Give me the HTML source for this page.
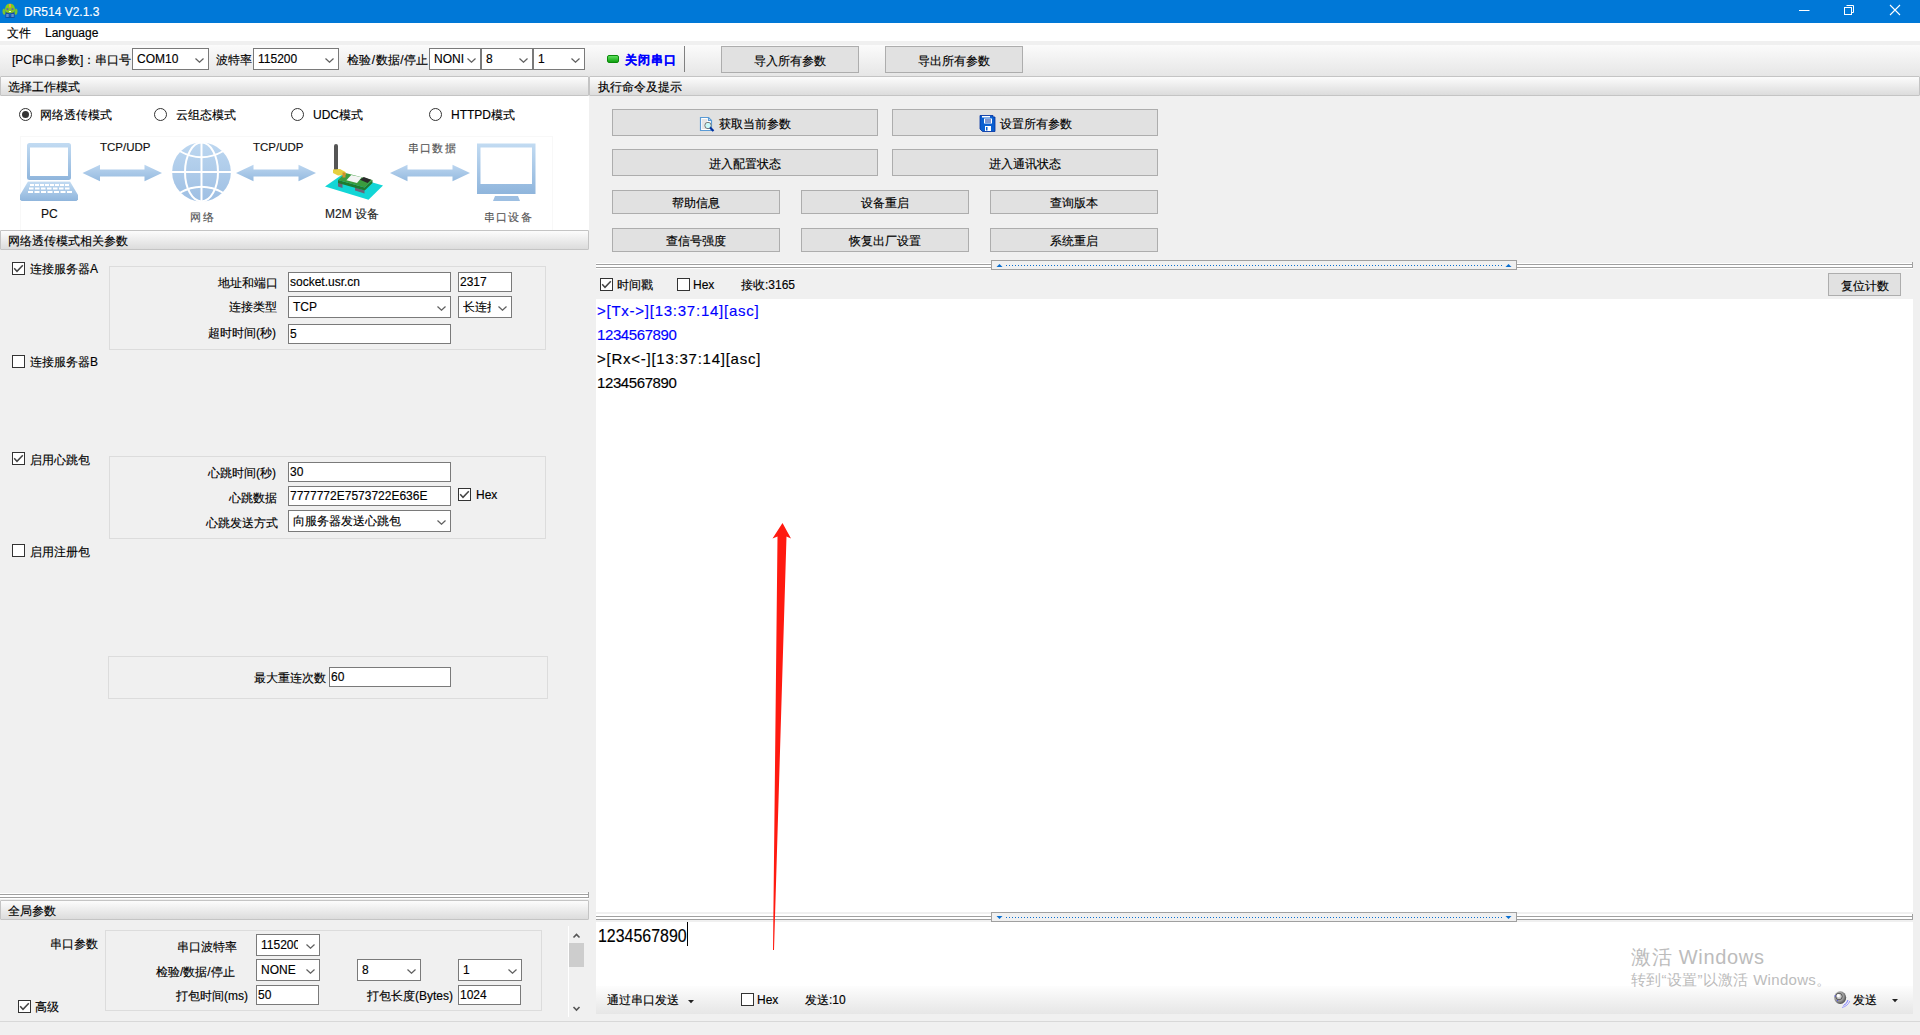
<!DOCTYPE html>
<html><head><meta charset="utf-8">
<style>
*{box-sizing:border-box;margin:0;padding:0}
html,body{width:1920px;height:1035px;overflow:hidden}
body{-webkit-text-stroke:.15px currentColor;position:relative;background:#f0f0f0;font-family:"Liberation Sans",sans-serif;font-size:12px;color:#000}
.a{position:absolute;white-space:nowrap}
.t{position:absolute;white-space:nowrap;line-height:14px}
#title{left:0;top:0;width:1920px;height:23px;background:#0078d7}
#menu{left:0;top:23px;width:1920px;height:18px;background:#fff}
#tb{left:0;top:45px;width:1920px;height:31px;background:linear-gradient(#fbfbfb,#e6e6e6)}
.hdr{position:absolute;height:20px;background:linear-gradient(#fcfcfc,#dcdcdc);border:1px solid #c4c4c4;border-radius:1px}
.hdr span{position:absolute;left:7px;top:3px;line-height:14px}
.combo{position:absolute;background:#fff;border:1px solid #7a7a7a;height:22px}
.combo span{position:absolute;left:4px;top:3px;line-height:14px;white-space:nowrap}
.combo svg{position:absolute;right:4px;top:9px}
.inp{position:absolute;background:#fff;border:1px solid #7a7a7a;height:20px}
.inp span{position:absolute;left:1px;top:2px;line-height:14px;white-space:nowrap}
.btn{position:absolute;background:#e1e1e1;border:1px solid #adadad;text-align:center;line-height:24px;white-space:nowrap}
.chk{position:absolute;width:13px;height:13px;border:1px solid #333;background:#fff}
.chk svg{position:absolute;left:0;top:0}
.rad{position:absolute;width:13px;height:13px;border:1px solid #333;border-radius:50%;background:#fff}
.rad.on::after{content:"";position:absolute;left:2px;top:2px;width:7px;height:7px;border-radius:50%;background:#333}
.grp{position:absolute;border:1px solid #dcdcdc}
</style></head><body>
<!-- title -->
<div id="title" class="a"></div>
<div class="t" style="left:24px;top:5px;color:#fff;font-size:12px">DR514 V2.1.3</div>
<svg class="a" style="left:0;top:0" width="22" height="22" viewBox="0 0 22 22">
<ellipse cx="10" cy="17.3" rx="5" ry="0.8" fill="#0a3a80" opacity=".6"/>
<rect x="5.5" y="12" width="4" height="5.5" rx="1" fill="#1a4aa0"/><rect x="10.5" y="12" width="4" height="5.5" rx="1" fill="#1a4aa0"/>
<rect x="6.2" y="14" width="2.5" height="3" fill="#5a90d0"/><rect x="11.3" y="14" width="2.5" height="3" fill="#5a90d0"/>
<path d="M2.5 11Q2.5 8 4.5 8.5L5.5 13L4.5 15Q2.5 14.5 2.5 11Z" fill="#7cc52a"/>
<path d="M17.5 11Q17.5 8 15.5 8.5L14.5 13L15.5 15Q17.5 14.5 17.5 11Z" fill="#7cc52a"/>
<path d="M5 10Q5 3.5 10 3.5Q15 3.5 15 10Q15 13 10 13Q5 13 5 10Z" fill="#84c91e"/>
<rect x="9" y="4" width="2" height="3.5" fill="#f0a040"/>
<circle cx="7.5" cy="9.2" r="1.1" fill="#6a60b0"/><circle cx="12.5" cy="9.2" r="1.1" fill="#6a60b0"/>
<rect x="9" y="11" width="2" height="1" fill="#eee"/>
</svg>
<svg class="a" style="left:1790px;top:0" width="130" height="23">
<rect x="9" y="10" width="10.5" height="1" fill="#fff"/>
<path d="M56.5 5.5H63.5V12.5H62" stroke="#fff" fill="none"/><rect x="54.5" y="7.5" width="7" height="7" stroke="#fff" fill="none"/>
<path d="M100 5L110 15M110 5L100 15" stroke="#fff" stroke-width="1.1"/>
</svg>
<!-- menu -->
<div id="menu" class="a"></div>
<div class="t" style="left:7px;top:26px">文件</div>
<div class="t" style="left:45px;top:26px">Language</div>
<!-- toolbar -->
<div id="tb" class="a"></div>
<div class="t" style="left:12px;top:53px">[PC串口参数]：串口号</div>
<div class="combo" style="left:132px;top:48px;width:77px"><span>COM10</span><svg width="9" height="5"><path d="M.5 .5L4.5 4.2L8.5 .5" stroke="#606060" stroke-width="1.25" fill="none"/></svg></div>
<div class="t" style="left:216px;top:53px">波特率</div>
<div class="combo" style="left:253px;top:48px;width:86px"><span>115200</span><svg width="9" height="5"><path d="M.5 .5L4.5 4.2L8.5 .5" stroke="#606060" stroke-width="1.25" fill="none"/></svg></div>
<div class="t" style="left:347px;top:53px;letter-spacing:.4px">检验/数据/停止</div>
<div class="combo" style="left:429px;top:48px;width:52px"><span>NONI</span><svg width="9" height="5"><path d="M.5 .5L4.5 4.2L8.5 .5" stroke="#606060" stroke-width="1.25" fill="none"/></svg></div>
<div class="combo" style="left:481px;top:48px;width:52px"><span>8</span><svg width="9" height="5"><path d="M.5 .5L4.5 4.2L8.5 .5" stroke="#606060" stroke-width="1.25" fill="none"/></svg></div>
<div class="combo" style="left:533px;top:48px;width:52px"><span>1</span><svg width="9" height="5"><path d="M.5 .5L4.5 4.2L8.5 .5" stroke="#606060" stroke-width="1.25" fill="none"/></svg></div>
<div class="a" style="left:607px;top:55px;width:12px;height:8px;background:linear-gradient(#5fe05f,#10a010);border:1px solid #0a8a0a;border-radius:2px"></div>
<div class="t" style="left:625px;top:53px;color:#0000ff;font-weight:bold;letter-spacing:1px">关闭串口</div>
<div class="a" style="left:684px;top:46px;width:1px;height:26px;background:#808080"></div>
<div class="btn" style="left:721px;top:46px;width:138px;height:27px;line-height:28px">导入所有参数</div>
<div class="btn" style="left:885px;top:46px;width:138px;height:27px;line-height:28px">导出所有参数</div>

<!-- LEFT PANEL -->
<div class="hdr" style="left:0;top:76px;width:589px"><span>选择工作模式</span></div>
<div class="a" style="left:0;top:96px;width:589px;height:134px;background:#fff"></div>
<div class="rad on" style="left:19px;top:108px"></div><div class="t" style="left:40px;top:108px">网络透传模式</div>
<div class="rad" style="left:154px;top:108px"></div><div class="t" style="left:176px;top:108px">云组态模式</div>
<div class="rad" style="left:291px;top:108px"></div><div class="t" style="left:313px;top:108px">UDC模式</div>
<div class="rad" style="left:429px;top:108px"></div><div class="t" style="left:451px;top:108px">HTTPD模式</div>
<svg class="a" style="left:0;top:96px" width="589" height="134" viewBox="0 96 589 134">
<defs><linearGradient id="bg" x1="0" y1="0" x2="0" y2="1"><stop offset="0" stop-color="#bcd6f0"/><stop offset="1" stop-color="#95badf"/></linearGradient>
<linearGradient id="bg3" x1="0" y1="0" x2="0" y2="1"><stop offset="0" stop-color="#bdd7f0"/><stop offset="1" stop-color="#9ebfe3"/></linearGradient><linearGradient id="bg2" x1="0" y1="0" x2="0" y2="1"><stop offset="0" stop-color="#c2dbf2"/><stop offset="1" stop-color="#8fb5dc"/></linearGradient></defs>
<rect x="20.5" y="136.5" width="532" height="100" fill="none" stroke="#f8f8f8"/>
<!-- laptop -->
<rect x="27" y="143" width="44" height="37" rx="2.5" fill="url(#bg2)"/>
<rect x="30" y="147.5" width="38" height="28.5" fill="#fff"/>
<path d="M28 181.5H70L78 195V199.5L76.5 201H21.5L20 199.5V195Z" fill="url(#bg2)"/>
<g fill="#fff">
<rect x="30" y="184" width="4" height="2"/><rect x="35" y="184" width="4" height="2"/><rect x="40" y="184" width="4" height="2"/><rect x="45" y="184" width="4" height="2"/><rect x="50" y="184" width="4" height="2"/><rect x="55" y="184" width="4" height="2"/><rect x="60" y="184" width="4" height="2"/><rect x="65" y="184" width="4" height="2"/>
<rect x="29" y="187.5" width="4.5" height="2"/><rect x="35" y="187.5" width="4.5" height="2"/><rect x="41" y="187.5" width="4.5" height="2"/><rect x="47" y="187.5" width="4.5" height="2"/><rect x="53" y="187.5" width="4.5" height="2"/><rect x="59" y="187.5" width="4.5" height="2"/><rect x="65" y="187.5" width="4.5" height="2"/>
<rect x="28" y="191" width="5" height="2"/><rect x="34.5" y="191" width="5" height="2"/><rect x="41" y="191" width="5" height="2"/><rect x="47.5" y="191" width="5" height="2"/><rect x="54" y="191" width="5" height="2"/><rect x="60.5" y="191" width="5" height="2"/><rect x="67" y="191" width="5" height="2"/>
</g>
<rect x="27" y="180" width="44" height="1.2" fill="#fff"/>
<path d="M82.5 173L100.0 164.8V169.4H144.5V164.8L162 173L144.5 181.2V176.6H100.0V181.2Z" fill="url(#bg)"/><path d="M236 173L253.5 164.8V169.4H298.5V164.8L316 173L298.5 181.2V176.6H253.5V181.2Z" fill="url(#bg)"/><path d="M390 173L407.5 164.8V169.4H452.5V164.8L470 173L452.5 181.2V176.6H407.5V181.2Z" fill="url(#bg)"/>
<!-- globe -->
<g transform="translate(201.5 172)">
<circle r="29.4" fill="url(#bg3)"/>
<g stroke="#fff" stroke-width="2" fill="none">
<line x1="0" y1="-30" x2="0" y2="30"/><line x1="-30" y1="0" x2="30" y2="0"/>
<ellipse rx="16.5" ry="29.4"/>
<path d="M-22 -21Q0 -8.5 22 -21"/><path d="M-22 21Q0 8.5 22 21"/>
</g></g>
<!-- monitor -->
<rect x="477" y="143.5" width="58.5" height="50.5" fill="url(#bg2)"/>
<rect x="480.5" y="147.5" width="51.5" height="36.5" fill="#fff"/>
<path d="M495 196H518L520 201H493Z" fill="#9dbfe2"/>
<!-- m2m device -->
<path d="M325 186.5L343 174L383 185.5L368.5 199.8Z" fill="#12d6d6"/>
<path d="M338 182L342.5 183.5V188L338 186.5Z" fill="#6a6478"/><path d="M355 187.5L364.5 190.5V193.5L355 190.5Z" fill="#6a6478"/>
<path d="M338 180L364.7 187.5L372.5 180V183L364.7 190.5L338 183Z" fill="#1f7a30"/>
<path d="M338 180L345.5 173L372.5 180L364.7 187.5Z" fill="#3a9c3e"/>
<path d="M346.4 180.2L351.2 175L361.8 177.3L357 183Z" fill="#f4f4f4"/>
<path d="M360 179.8L363.8 177L371 179.8L367.6 183Z" fill="#2a2a2a"/>
<rect x="334" y="144" width="4" height="27" rx="2" fill="#555"/>
<path d="M333 169.5L340 169L345.5 172V175L338 175.5L333 173Z" fill="#e6d040"/>
<rect x="342.5" y="172.5" width="3" height="5" fill="#d09030"/>
</svg>
<div class="a" style="left:100px;top:140px;font-size:11.5px;line-height:14px;color:#111">TCP/UDP</div>
<div class="a" style="left:253px;top:140px;font-size:11.5px;line-height:14px;color:#111">TCP/UDP</div>
<div class="a" style="left:408px;top:141px;font-size:11px;line-height:14px;color:#555;letter-spacing:1.2px">串口数据</div>
<div class="a" style="left:41px;top:207px;font-size:12px;line-height:14px;color:#111">PC</div>
<div class="a" style="left:190px;top:210px;font-size:11px;line-height:14px;color:#555;letter-spacing:1.5px">网络</div>
<div class="a" style="left:325px;top:207px;font-size:12px;line-height:14px;color:#222">M2M 设备</div>
<div class="a" style="left:484px;top:210px;font-size:11px;line-height:14px;color:#555;letter-spacing:1.2px">串口设备</div>

<div class="hdr" style="left:0;top:230px;width:589px"><span>网络透传模式相关参数</span></div>

<div class="chk on" style="left:12px;top:262px"><svg width="11" height="11"><path d="M1.2 5.3L4 8.3L9.8 2.2" stroke="#444" stroke-width="1.5" fill="none"/></svg></div><div class="t" style="left:30px;top:262px">连接服务器A</div>
<div class="grp" style="left:109px;top:266px;width:437px;height:84px"></div>
<div class="t" style="left:218px;top:276px">地址和端口</div>
<div class="inp" style="left:288px;top:272px;width:163px"><span>socket.usr.cn</span></div>
<div class="inp" style="left:458px;top:272px;width:54px"><span>2317</span></div>
<div class="t" style="left:229px;top:300px">连接类型</div>
<div class="combo" style="left:288px;top:296px;width:163px"><span>TCP</span><svg width="9" height="5"><path d="M.5 .5L4.5 4.2L8.5 .5" stroke="#606060" stroke-width="1.25" fill="none"/></svg></div>
<div class="combo" style="left:458px;top:296px;width:54px"><span style="width:28px;overflow:hidden">长连接</span><svg width="9" height="5"><path d="M.5 .5L4.5 4.2L8.5 .5" stroke="#606060" stroke-width="1.25" fill="none"/></svg></div>
<div class="t" style="left:208px;top:326px">超时时间(秒)</div>
<div class="inp" style="left:288px;top:324px;width:163px"><span>5</span></div>

<div class="chk" style="left:12px;top:355px"></div><div class="t" style="left:30px;top:355px">连接服务器B</div>

<div class="chk on" style="left:12px;top:452px"><svg width="11" height="11"><path d="M1.2 5.3L4 8.3L9.8 2.2" stroke="#444" stroke-width="1.5" fill="none"/></svg></div><div class="t" style="left:30px;top:453px">启用心跳包</div>
<div class="grp" style="left:109px;top:456px;width:437px;height:83px"></div>
<div class="t" style="left:208px;top:466px">心跳时间(秒)</div>
<div class="inp" style="left:288px;top:462px;width:163px"><span>30</span></div>
<div class="t" style="left:229px;top:491px">心跳数据</div>
<div class="inp" style="left:288px;top:486px;width:163px"><span>7777772E7573722E636E</span></div>
<div class="chk on" style="left:458px;top:488px"><svg width="11" height="11"><path d="M1.2 5.3L4 8.3L9.8 2.2" stroke="#444" stroke-width="1.5" fill="none"/></svg></div><div class="t" style="left:476px;top:488px">Hex</div>
<div class="t" style="left:206px;top:516px">心跳发送方式</div>
<div class="combo" style="left:288px;top:510px;width:163px"><span>向服务器发送心跳包</span><svg width="9" height="5"><path d="M.5 .5L4.5 4.2L8.5 .5" stroke="#606060" stroke-width="1.25" fill="none"/></svg></div>

<div class="chk" style="left:12px;top:544px"></div><div class="t" style="left:30px;top:545px">启用注册包</div>

<div class="grp" style="left:108px;top:656px;width:440px;height:43px"></div>
<div class="t" style="left:254px;top:671px">最大重连次数</div>
<div class="inp" style="left:329px;top:667px;width:122px"><span>60</span></div>

<svg class="a" style="left:0;top:892px" width="590" height="7"><rect x="0" y="1" width="589" height="6" fill="#fff"/><rect x="0" y="2" width="589" height="1" fill="#a0a0a0"/><rect x="0" y="5" width="589" height="1" fill="#a0a0a0"/><rect x="588" y="0" width="1" height="6" fill="#a0a0a0"/></svg>
<div class="hdr" style="left:0;top:900px;width:589px"><span>全局参数</span></div>
<div class="t" style="left:50px;top:937px">串口参数</div>
<div class="grp" style="left:105px;top:930px;width:437px;height:81px"></div>
<div class="t" style="left:177px;top:940px">串口波特率</div>
<div class="combo" style="left:256px;top:934px;width:64px"><span style="width:37px;overflow:hidden">115200</span><svg width="9" height="5"><path d="M.5 .5L4.5 4.2L8.5 .5" stroke="#606060" stroke-width="1.25" fill="none"/></svg></div>
<div class="t" style="left:156px;top:965px">检验/数据/停止</div>
<div class="combo" style="left:256px;top:959px;width:64px"><span>NONE</span><svg width="9" height="5"><path d="M.5 .5L4.5 4.2L8.5 .5" stroke="#606060" stroke-width="1.25" fill="none"/></svg></div>
<div class="combo" style="left:357px;top:959px;width:64px"><span>8</span><svg width="9" height="5"><path d="M.5 .5L4.5 4.2L8.5 .5" stroke="#606060" stroke-width="1.25" fill="none"/></svg></div>
<div class="combo" style="left:458px;top:959px;width:64px"><span>1</span><svg width="9" height="5"><path d="M.5 .5L4.5 4.2L8.5 .5" stroke="#606060" stroke-width="1.25" fill="none"/></svg></div>
<div class="t" style="left:176px;top:989px">打包时间(ms)</div>
<div class="inp" style="left:256px;top:985px;width:63px"><span>50</span></div>
<div class="t" style="left:367px;top:989px">打包长度(Bytes)</div>
<div class="inp" style="left:458px;top:985px;width:63px"><span>1024</span></div>
<div class="chk on" style="left:18px;top:1000px"><svg width="11" height="11"><path d="M1.2 5.3L4 8.3L9.8 2.2" stroke="#444" stroke-width="1.5" fill="none"/></svg></div><div class="t" style="left:35px;top:1000px">高级</div>
<svg class="a" style="left:566px;top:924px" width="20" height="96">
<rect x="2" y="2" width="1" height="91" fill="#fff"/>
<rect x="3" y="19" width="15" height="24" fill="#cdcdcd"/>
<path d="M7.5 13.5L10.5 10.5L13.5 13.5" stroke="#555" stroke-width="1.6" fill="none"/>
<path d="M7.5 83L10.5 86L13.5 83" stroke="#555" stroke-width="1.6" fill="none"/>
</svg>
<div class="a" style="left:0;top:1021px;width:1920px;height:1px;background:#d8d8d8"></div>

<!-- RIGHT PANEL -->
<div class="hdr" style="left:589px;top:76px;width:1331px"><span style="left:8px">执行命令及提示</span></div>
<div class="btn" style="left:612px;top:109px;width:266px;height:27px;line-height:29px"><svg style="vertical-align:-4px;margin-right:4px" width="16" height="16" viewBox="0 0 16 16">
<path d="M1.5 1.5H9.5L12.5 4.5V14.5H1.5Z" fill="#fff" stroke="#5b9bd5" stroke-width="1.2"/>
<path d="M9.5 1.5V4.5H12.5" fill="none" stroke="#5b9bd5" stroke-width="1.2"/>
<g stroke="#ccc" stroke-width="1"><line x1="3" y1="4" x2="8" y2="4"/><line x1="3" y1="6" x2="8" y2="6"/><line x1="3" y1="8" x2="6" y2="8"/><line x1="3" y1="10" x2="6" y2="10"/><line x1="3" y1="12" x2="7" y2="12"/></g>
<circle cx="9" cy="9.5" r="3.2" fill="#c8f8f8" stroke="#777" stroke-width="1"/>
<path d="M11 11.5L14.5 15" stroke="#0030a0" stroke-width="2.2"/>
</svg>获取当前参数</div>
<div class="btn" style="left:892px;top:109px;width:266px;height:27px;line-height:29px"><svg style="vertical-align:-4px;margin-right:4px" width="17" height="17" viewBox="0 0 17 17">
<path d="M1 0.5H14V2H16V16.5H3.5L1 14Z" fill="#0a5fd0" stroke="#0030a0" stroke-width="0.8"/>
<rect x="3" y="1" width="8" height="1.5" fill="#fff"/>
<rect x="5" y="3.5" width="8" height="5" fill="#fff"/><rect x="6" y="4.5" width="6" height="1" fill="#0030a0"/><rect x="6" y="6.5" width="6" height="1" fill="#0030a0"/>
<rect x="6" y="11" width="6" height="5" fill="#fff"/><rect x="7" y="12" width="1.5" height="3.5" fill="#0a5fd0"/>
</svg>设置所有参数</div>
<div class="btn" style="left:612px;top:149px;width:266px;height:27px;line-height:29px">进入配置状态</div>
<div class="btn" style="left:892px;top:149px;width:266px;height:27px;line-height:29px">进入通讯状态</div>
<div class="btn" style="left:612px;top:190px;width:168px;height:24px">帮助信息</div>
<div class="btn" style="left:801px;top:190px;width:168px;height:24px">设备重启</div>
<div class="btn" style="left:990px;top:190px;width:168px;height:24px">查询版本</div>
<div class="btn" style="left:612px;top:228px;width:168px;height:24px">查信号强度</div>
<div class="btn" style="left:801px;top:228px;width:168px;height:24px">恢复出厂设置</div>
<div class="btn" style="left:990px;top:228px;width:168px;height:24px">系统重启</div>
<svg class="a" style="left:0;top:0" width="1920" height="1035" viewBox="0 0 1920 1035">
<rect x="596" y="263" width="1317" height="6" fill="#fff"/>
<rect x="596" y="264" width="1317" height="1" fill="#a0a0a0"/><rect x="596" y="267" width="1317" height="1" fill="#a0a0a0"/>
<rect x="1912" y="262" width="1" height="6" fill="#a0a0a0"/>
<rect x="991.5" y="260.5" width="525" height="9" fill="#f0f0f0" stroke="#a0a0a0"/>
<rect x="1006" y="265" width="1" height="1" fill="#0a6fd0"/><rect x="1009" y="265" width="1" height="1" fill="#0a6fd0"/><rect x="1012" y="265" width="1" height="1" fill="#0a6fd0"/><rect x="1015" y="265" width="1" height="1" fill="#0a6fd0"/><rect x="1018" y="265" width="1" height="1" fill="#0a6fd0"/><rect x="1021" y="265" width="1" height="1" fill="#0a6fd0"/><rect x="1024" y="265" width="1" height="1" fill="#0a6fd0"/><rect x="1027" y="265" width="1" height="1" fill="#0a6fd0"/><rect x="1030" y="265" width="1" height="1" fill="#0a6fd0"/><rect x="1033" y="265" width="1" height="1" fill="#0a6fd0"/><rect x="1036" y="265" width="1" height="1" fill="#0a6fd0"/><rect x="1039" y="265" width="1" height="1" fill="#0a6fd0"/><rect x="1042" y="265" width="1" height="1" fill="#0a6fd0"/><rect x="1045" y="265" width="1" height="1" fill="#0a6fd0"/><rect x="1048" y="265" width="1" height="1" fill="#0a6fd0"/><rect x="1051" y="265" width="1" height="1" fill="#0a6fd0"/><rect x="1054" y="265" width="1" height="1" fill="#0a6fd0"/><rect x="1057" y="265" width="1" height="1" fill="#0a6fd0"/><rect x="1060" y="265" width="1" height="1" fill="#0a6fd0"/><rect x="1063" y="265" width="1" height="1" fill="#0a6fd0"/><rect x="1066" y="265" width="1" height="1" fill="#0a6fd0"/><rect x="1069" y="265" width="1" height="1" fill="#0a6fd0"/><rect x="1072" y="265" width="1" height="1" fill="#0a6fd0"/><rect x="1075" y="265" width="1" height="1" fill="#0a6fd0"/><rect x="1078" y="265" width="1" height="1" fill="#0a6fd0"/><rect x="1081" y="265" width="1" height="1" fill="#0a6fd0"/><rect x="1084" y="265" width="1" height="1" fill="#0a6fd0"/><rect x="1087" y="265" width="1" height="1" fill="#0a6fd0"/><rect x="1090" y="265" width="1" height="1" fill="#0a6fd0"/><rect x="1093" y="265" width="1" height="1" fill="#0a6fd0"/><rect x="1096" y="265" width="1" height="1" fill="#0a6fd0"/><rect x="1099" y="265" width="1" height="1" fill="#0a6fd0"/><rect x="1102" y="265" width="1" height="1" fill="#0a6fd0"/><rect x="1105" y="265" width="1" height="1" fill="#0a6fd0"/><rect x="1108" y="265" width="1" height="1" fill="#0a6fd0"/><rect x="1111" y="265" width="1" height="1" fill="#0a6fd0"/><rect x="1114" y="265" width="1" height="1" fill="#0a6fd0"/><rect x="1117" y="265" width="1" height="1" fill="#0a6fd0"/><rect x="1120" y="265" width="1" height="1" fill="#0a6fd0"/><rect x="1123" y="265" width="1" height="1" fill="#0a6fd0"/><rect x="1126" y="265" width="1" height="1" fill="#0a6fd0"/><rect x="1129" y="265" width="1" height="1" fill="#0a6fd0"/><rect x="1132" y="265" width="1" height="1" fill="#0a6fd0"/><rect x="1135" y="265" width="1" height="1" fill="#0a6fd0"/><rect x="1138" y="265" width="1" height="1" fill="#0a6fd0"/><rect x="1141" y="265" width="1" height="1" fill="#0a6fd0"/><rect x="1144" y="265" width="1" height="1" fill="#0a6fd0"/><rect x="1147" y="265" width="1" height="1" fill="#0a6fd0"/><rect x="1150" y="265" width="1" height="1" fill="#0a6fd0"/><rect x="1153" y="265" width="1" height="1" fill="#0a6fd0"/><rect x="1156" y="265" width="1" height="1" fill="#0a6fd0"/><rect x="1159" y="265" width="1" height="1" fill="#0a6fd0"/><rect x="1162" y="265" width="1" height="1" fill="#0a6fd0"/><rect x="1165" y="265" width="1" height="1" fill="#0a6fd0"/><rect x="1168" y="265" width="1" height="1" fill="#0a6fd0"/><rect x="1171" y="265" width="1" height="1" fill="#0a6fd0"/><rect x="1174" y="265" width="1" height="1" fill="#0a6fd0"/><rect x="1177" y="265" width="1" height="1" fill="#0a6fd0"/><rect x="1180" y="265" width="1" height="1" fill="#0a6fd0"/><rect x="1183" y="265" width="1" height="1" fill="#0a6fd0"/><rect x="1186" y="265" width="1" height="1" fill="#0a6fd0"/><rect x="1189" y="265" width="1" height="1" fill="#0a6fd0"/><rect x="1192" y="265" width="1" height="1" fill="#0a6fd0"/><rect x="1195" y="265" width="1" height="1" fill="#0a6fd0"/><rect x="1198" y="265" width="1" height="1" fill="#0a6fd0"/><rect x="1201" y="265" width="1" height="1" fill="#0a6fd0"/><rect x="1204" y="265" width="1" height="1" fill="#0a6fd0"/><rect x="1207" y="265" width="1" height="1" fill="#0a6fd0"/><rect x="1210" y="265" width="1" height="1" fill="#0a6fd0"/><rect x="1213" y="265" width="1" height="1" fill="#0a6fd0"/><rect x="1216" y="265" width="1" height="1" fill="#0a6fd0"/><rect x="1219" y="265" width="1" height="1" fill="#0a6fd0"/><rect x="1222" y="265" width="1" height="1" fill="#0a6fd0"/><rect x="1225" y="265" width="1" height="1" fill="#0a6fd0"/><rect x="1228" y="265" width="1" height="1" fill="#0a6fd0"/><rect x="1231" y="265" width="1" height="1" fill="#0a6fd0"/><rect x="1234" y="265" width="1" height="1" fill="#0a6fd0"/><rect x="1237" y="265" width="1" height="1" fill="#0a6fd0"/><rect x="1240" y="265" width="1" height="1" fill="#0a6fd0"/><rect x="1243" y="265" width="1" height="1" fill="#0a6fd0"/><rect x="1246" y="265" width="1" height="1" fill="#0a6fd0"/><rect x="1249" y="265" width="1" height="1" fill="#0a6fd0"/><rect x="1252" y="265" width="1" height="1" fill="#0a6fd0"/><rect x="1255" y="265" width="1" height="1" fill="#0a6fd0"/><rect x="1258" y="265" width="1" height="1" fill="#0a6fd0"/><rect x="1261" y="265" width="1" height="1" fill="#0a6fd0"/><rect x="1264" y="265" width="1" height="1" fill="#0a6fd0"/><rect x="1267" y="265" width="1" height="1" fill="#0a6fd0"/><rect x="1270" y="265" width="1" height="1" fill="#0a6fd0"/><rect x="1273" y="265" width="1" height="1" fill="#0a6fd0"/><rect x="1276" y="265" width="1" height="1" fill="#0a6fd0"/><rect x="1279" y="265" width="1" height="1" fill="#0a6fd0"/><rect x="1282" y="265" width="1" height="1" fill="#0a6fd0"/><rect x="1285" y="265" width="1" height="1" fill="#0a6fd0"/><rect x="1288" y="265" width="1" height="1" fill="#0a6fd0"/><rect x="1291" y="265" width="1" height="1" fill="#0a6fd0"/><rect x="1294" y="265" width="1" height="1" fill="#0a6fd0"/><rect x="1297" y="265" width="1" height="1" fill="#0a6fd0"/><rect x="1300" y="265" width="1" height="1" fill="#0a6fd0"/><rect x="1303" y="265" width="1" height="1" fill="#0a6fd0"/><rect x="1306" y="265" width="1" height="1" fill="#0a6fd0"/><rect x="1309" y="265" width="1" height="1" fill="#0a6fd0"/><rect x="1312" y="265" width="1" height="1" fill="#0a6fd0"/><rect x="1315" y="265" width="1" height="1" fill="#0a6fd0"/><rect x="1318" y="265" width="1" height="1" fill="#0a6fd0"/><rect x="1321" y="265" width="1" height="1" fill="#0a6fd0"/><rect x="1324" y="265" width="1" height="1" fill="#0a6fd0"/><rect x="1327" y="265" width="1" height="1" fill="#0a6fd0"/><rect x="1330" y="265" width="1" height="1" fill="#0a6fd0"/><rect x="1333" y="265" width="1" height="1" fill="#0a6fd0"/><rect x="1336" y="265" width="1" height="1" fill="#0a6fd0"/><rect x="1339" y="265" width="1" height="1" fill="#0a6fd0"/><rect x="1342" y="265" width="1" height="1" fill="#0a6fd0"/><rect x="1345" y="265" width="1" height="1" fill="#0a6fd0"/><rect x="1348" y="265" width="1" height="1" fill="#0a6fd0"/><rect x="1351" y="265" width="1" height="1" fill="#0a6fd0"/><rect x="1354" y="265" width="1" height="1" fill="#0a6fd0"/><rect x="1357" y="265" width="1" height="1" fill="#0a6fd0"/><rect x="1360" y="265" width="1" height="1" fill="#0a6fd0"/><rect x="1363" y="265" width="1" height="1" fill="#0a6fd0"/><rect x="1366" y="265" width="1" height="1" fill="#0a6fd0"/><rect x="1369" y="265" width="1" height="1" fill="#0a6fd0"/><rect x="1372" y="265" width="1" height="1" fill="#0a6fd0"/><rect x="1375" y="265" width="1" height="1" fill="#0a6fd0"/><rect x="1378" y="265" width="1" height="1" fill="#0a6fd0"/><rect x="1381" y="265" width="1" height="1" fill="#0a6fd0"/><rect x="1384" y="265" width="1" height="1" fill="#0a6fd0"/><rect x="1387" y="265" width="1" height="1" fill="#0a6fd0"/><rect x="1390" y="265" width="1" height="1" fill="#0a6fd0"/><rect x="1393" y="265" width="1" height="1" fill="#0a6fd0"/><rect x="1396" y="265" width="1" height="1" fill="#0a6fd0"/><rect x="1399" y="265" width="1" height="1" fill="#0a6fd0"/><rect x="1402" y="265" width="1" height="1" fill="#0a6fd0"/><rect x="1405" y="265" width="1" height="1" fill="#0a6fd0"/><rect x="1408" y="265" width="1" height="1" fill="#0a6fd0"/><rect x="1411" y="265" width="1" height="1" fill="#0a6fd0"/><rect x="1414" y="265" width="1" height="1" fill="#0a6fd0"/><rect x="1417" y="265" width="1" height="1" fill="#0a6fd0"/><rect x="1420" y="265" width="1" height="1" fill="#0a6fd0"/><rect x="1423" y="265" width="1" height="1" fill="#0a6fd0"/><rect x="1426" y="265" width="1" height="1" fill="#0a6fd0"/><rect x="1429" y="265" width="1" height="1" fill="#0a6fd0"/><rect x="1432" y="265" width="1" height="1" fill="#0a6fd0"/><rect x="1435" y="265" width="1" height="1" fill="#0a6fd0"/><rect x="1438" y="265" width="1" height="1" fill="#0a6fd0"/><rect x="1441" y="265" width="1" height="1" fill="#0a6fd0"/><rect x="1444" y="265" width="1" height="1" fill="#0a6fd0"/><rect x="1447" y="265" width="1" height="1" fill="#0a6fd0"/><rect x="1450" y="265" width="1" height="1" fill="#0a6fd0"/><rect x="1453" y="265" width="1" height="1" fill="#0a6fd0"/><rect x="1456" y="265" width="1" height="1" fill="#0a6fd0"/><rect x="1459" y="265" width="1" height="1" fill="#0a6fd0"/><rect x="1462" y="265" width="1" height="1" fill="#0a6fd0"/><rect x="1465" y="265" width="1" height="1" fill="#0a6fd0"/><rect x="1468" y="265" width="1" height="1" fill="#0a6fd0"/><rect x="1471" y="265" width="1" height="1" fill="#0a6fd0"/><rect x="1474" y="265" width="1" height="1" fill="#0a6fd0"/><rect x="1477" y="265" width="1" height="1" fill="#0a6fd0"/><rect x="1480" y="265" width="1" height="1" fill="#0a6fd0"/><rect x="1483" y="265" width="1" height="1" fill="#0a6fd0"/><rect x="1486" y="265" width="1" height="1" fill="#0a6fd0"/><rect x="1489" y="265" width="1" height="1" fill="#0a6fd0"/><rect x="1492" y="265" width="1" height="1" fill="#0a6fd0"/><rect x="1495" y="265" width="1" height="1" fill="#0a6fd0"/><rect x="1498" y="265" width="1" height="1" fill="#0a6fd0"/><rect x="1501" y="265" width="1" height="1" fill="#0a6fd0"/><path d="M996.5 267L999.5 264L1002.5 267Z" fill="#0a6fd0"/><path d="M1505.5 267L1508.5 264L1511.5 267Z" fill="#0a6fd0"/>
</svg>
<div class="chk on" style="left:600px;top:278px"><svg width="11" height="11"><path d="M1.2 5.3L4 8.3L9.8 2.2" stroke="#444" stroke-width="1.5" fill="none"/></svg></div><div class="t" style="left:617px;top:278px">时间戳</div>
<div class="chk" style="left:677px;top:278px"></div><div class="t" style="left:693px;top:278px">Hex</div>
<div class="t" style="left:741px;top:278px">接收:3165</div>
<div class="btn" style="left:1828px;top:273px;width:73px;height:23px;line-height:25px">复位计数</div>
<div class="a" style="left:596px;top:299px;width:1317px;height:613px;background:#fff"></div>
<div class="a" style="left:597px;top:299px;font-size:15px;line-height:24px;color:#0000ff;letter-spacing:.75px">&gt;[Tx-&gt;][13:37:14][asc]</div><div class="a" style="left:597px;top:323px;font-size:15px;line-height:24px;color:#0000ff;letter-spacing:-.4px">1234567890</div>
<div class="a" style="left:597px;top:347px;font-size:15px;line-height:24px;color:#000;letter-spacing:.75px">&gt;[Rx&lt;-][13:37:14][asc]</div><div class="a" style="left:597px;top:371px;font-size:15px;line-height:24px;color:#000;letter-spacing:-.4px">1234567890</div>
<svg class="a" style="left:0;top:0" width="1920" height="1035" viewBox="0 0 1920 1035">
<rect x="596" y="912" width="1317" height="10" fill="#f0f0f0"/>
<rect x="596" y="914" width="1317" height="6" fill="#fff"/>
<rect x="596" y="916" width="1317" height="1" fill="#a0a0a0"/><rect x="596" y="919" width="1317" height="1" fill="#a0a0a0"/>
<rect x="1912" y="914" width="1" height="6" fill="#a0a0a0"/><rect x="596" y="920" width="1317" height="2" fill="#f0f0f0"/>
<rect x="991.5" y="912.5" width="525" height="9" fill="#f0f0f0" stroke="#a0a0a0"/>
<rect x="1006" y="917" width="1" height="1" fill="#0a6fd0"/><rect x="1009" y="917" width="1" height="1" fill="#0a6fd0"/><rect x="1012" y="917" width="1" height="1" fill="#0a6fd0"/><rect x="1015" y="917" width="1" height="1" fill="#0a6fd0"/><rect x="1018" y="917" width="1" height="1" fill="#0a6fd0"/><rect x="1021" y="917" width="1" height="1" fill="#0a6fd0"/><rect x="1024" y="917" width="1" height="1" fill="#0a6fd0"/><rect x="1027" y="917" width="1" height="1" fill="#0a6fd0"/><rect x="1030" y="917" width="1" height="1" fill="#0a6fd0"/><rect x="1033" y="917" width="1" height="1" fill="#0a6fd0"/><rect x="1036" y="917" width="1" height="1" fill="#0a6fd0"/><rect x="1039" y="917" width="1" height="1" fill="#0a6fd0"/><rect x="1042" y="917" width="1" height="1" fill="#0a6fd0"/><rect x="1045" y="917" width="1" height="1" fill="#0a6fd0"/><rect x="1048" y="917" width="1" height="1" fill="#0a6fd0"/><rect x="1051" y="917" width="1" height="1" fill="#0a6fd0"/><rect x="1054" y="917" width="1" height="1" fill="#0a6fd0"/><rect x="1057" y="917" width="1" height="1" fill="#0a6fd0"/><rect x="1060" y="917" width="1" height="1" fill="#0a6fd0"/><rect x="1063" y="917" width="1" height="1" fill="#0a6fd0"/><rect x="1066" y="917" width="1" height="1" fill="#0a6fd0"/><rect x="1069" y="917" width="1" height="1" fill="#0a6fd0"/><rect x="1072" y="917" width="1" height="1" fill="#0a6fd0"/><rect x="1075" y="917" width="1" height="1" fill="#0a6fd0"/><rect x="1078" y="917" width="1" height="1" fill="#0a6fd0"/><rect x="1081" y="917" width="1" height="1" fill="#0a6fd0"/><rect x="1084" y="917" width="1" height="1" fill="#0a6fd0"/><rect x="1087" y="917" width="1" height="1" fill="#0a6fd0"/><rect x="1090" y="917" width="1" height="1" fill="#0a6fd0"/><rect x="1093" y="917" width="1" height="1" fill="#0a6fd0"/><rect x="1096" y="917" width="1" height="1" fill="#0a6fd0"/><rect x="1099" y="917" width="1" height="1" fill="#0a6fd0"/><rect x="1102" y="917" width="1" height="1" fill="#0a6fd0"/><rect x="1105" y="917" width="1" height="1" fill="#0a6fd0"/><rect x="1108" y="917" width="1" height="1" fill="#0a6fd0"/><rect x="1111" y="917" width="1" height="1" fill="#0a6fd0"/><rect x="1114" y="917" width="1" height="1" fill="#0a6fd0"/><rect x="1117" y="917" width="1" height="1" fill="#0a6fd0"/><rect x="1120" y="917" width="1" height="1" fill="#0a6fd0"/><rect x="1123" y="917" width="1" height="1" fill="#0a6fd0"/><rect x="1126" y="917" width="1" height="1" fill="#0a6fd0"/><rect x="1129" y="917" width="1" height="1" fill="#0a6fd0"/><rect x="1132" y="917" width="1" height="1" fill="#0a6fd0"/><rect x="1135" y="917" width="1" height="1" fill="#0a6fd0"/><rect x="1138" y="917" width="1" height="1" fill="#0a6fd0"/><rect x="1141" y="917" width="1" height="1" fill="#0a6fd0"/><rect x="1144" y="917" width="1" height="1" fill="#0a6fd0"/><rect x="1147" y="917" width="1" height="1" fill="#0a6fd0"/><rect x="1150" y="917" width="1" height="1" fill="#0a6fd0"/><rect x="1153" y="917" width="1" height="1" fill="#0a6fd0"/><rect x="1156" y="917" width="1" height="1" fill="#0a6fd0"/><rect x="1159" y="917" width="1" height="1" fill="#0a6fd0"/><rect x="1162" y="917" width="1" height="1" fill="#0a6fd0"/><rect x="1165" y="917" width="1" height="1" fill="#0a6fd0"/><rect x="1168" y="917" width="1" height="1" fill="#0a6fd0"/><rect x="1171" y="917" width="1" height="1" fill="#0a6fd0"/><rect x="1174" y="917" width="1" height="1" fill="#0a6fd0"/><rect x="1177" y="917" width="1" height="1" fill="#0a6fd0"/><rect x="1180" y="917" width="1" height="1" fill="#0a6fd0"/><rect x="1183" y="917" width="1" height="1" fill="#0a6fd0"/><rect x="1186" y="917" width="1" height="1" fill="#0a6fd0"/><rect x="1189" y="917" width="1" height="1" fill="#0a6fd0"/><rect x="1192" y="917" width="1" height="1" fill="#0a6fd0"/><rect x="1195" y="917" width="1" height="1" fill="#0a6fd0"/><rect x="1198" y="917" width="1" height="1" fill="#0a6fd0"/><rect x="1201" y="917" width="1" height="1" fill="#0a6fd0"/><rect x="1204" y="917" width="1" height="1" fill="#0a6fd0"/><rect x="1207" y="917" width="1" height="1" fill="#0a6fd0"/><rect x="1210" y="917" width="1" height="1" fill="#0a6fd0"/><rect x="1213" y="917" width="1" height="1" fill="#0a6fd0"/><rect x="1216" y="917" width="1" height="1" fill="#0a6fd0"/><rect x="1219" y="917" width="1" height="1" fill="#0a6fd0"/><rect x="1222" y="917" width="1" height="1" fill="#0a6fd0"/><rect x="1225" y="917" width="1" height="1" fill="#0a6fd0"/><rect x="1228" y="917" width="1" height="1" fill="#0a6fd0"/><rect x="1231" y="917" width="1" height="1" fill="#0a6fd0"/><rect x="1234" y="917" width="1" height="1" fill="#0a6fd0"/><rect x="1237" y="917" width="1" height="1" fill="#0a6fd0"/><rect x="1240" y="917" width="1" height="1" fill="#0a6fd0"/><rect x="1243" y="917" width="1" height="1" fill="#0a6fd0"/><rect x="1246" y="917" width="1" height="1" fill="#0a6fd0"/><rect x="1249" y="917" width="1" height="1" fill="#0a6fd0"/><rect x="1252" y="917" width="1" height="1" fill="#0a6fd0"/><rect x="1255" y="917" width="1" height="1" fill="#0a6fd0"/><rect x="1258" y="917" width="1" height="1" fill="#0a6fd0"/><rect x="1261" y="917" width="1" height="1" fill="#0a6fd0"/><rect x="1264" y="917" width="1" height="1" fill="#0a6fd0"/><rect x="1267" y="917" width="1" height="1" fill="#0a6fd0"/><rect x="1270" y="917" width="1" height="1" fill="#0a6fd0"/><rect x="1273" y="917" width="1" height="1" fill="#0a6fd0"/><rect x="1276" y="917" width="1" height="1" fill="#0a6fd0"/><rect x="1279" y="917" width="1" height="1" fill="#0a6fd0"/><rect x="1282" y="917" width="1" height="1" fill="#0a6fd0"/><rect x="1285" y="917" width="1" height="1" fill="#0a6fd0"/><rect x="1288" y="917" width="1" height="1" fill="#0a6fd0"/><rect x="1291" y="917" width="1" height="1" fill="#0a6fd0"/><rect x="1294" y="917" width="1" height="1" fill="#0a6fd0"/><rect x="1297" y="917" width="1" height="1" fill="#0a6fd0"/><rect x="1300" y="917" width="1" height="1" fill="#0a6fd0"/><rect x="1303" y="917" width="1" height="1" fill="#0a6fd0"/><rect x="1306" y="917" width="1" height="1" fill="#0a6fd0"/><rect x="1309" y="917" width="1" height="1" fill="#0a6fd0"/><rect x="1312" y="917" width="1" height="1" fill="#0a6fd0"/><rect x="1315" y="917" width="1" height="1" fill="#0a6fd0"/><rect x="1318" y="917" width="1" height="1" fill="#0a6fd0"/><rect x="1321" y="917" width="1" height="1" fill="#0a6fd0"/><rect x="1324" y="917" width="1" height="1" fill="#0a6fd0"/><rect x="1327" y="917" width="1" height="1" fill="#0a6fd0"/><rect x="1330" y="917" width="1" height="1" fill="#0a6fd0"/><rect x="1333" y="917" width="1" height="1" fill="#0a6fd0"/><rect x="1336" y="917" width="1" height="1" fill="#0a6fd0"/><rect x="1339" y="917" width="1" height="1" fill="#0a6fd0"/><rect x="1342" y="917" width="1" height="1" fill="#0a6fd0"/><rect x="1345" y="917" width="1" height="1" fill="#0a6fd0"/><rect x="1348" y="917" width="1" height="1" fill="#0a6fd0"/><rect x="1351" y="917" width="1" height="1" fill="#0a6fd0"/><rect x="1354" y="917" width="1" height="1" fill="#0a6fd0"/><rect x="1357" y="917" width="1" height="1" fill="#0a6fd0"/><rect x="1360" y="917" width="1" height="1" fill="#0a6fd0"/><rect x="1363" y="917" width="1" height="1" fill="#0a6fd0"/><rect x="1366" y="917" width="1" height="1" fill="#0a6fd0"/><rect x="1369" y="917" width="1" height="1" fill="#0a6fd0"/><rect x="1372" y="917" width="1" height="1" fill="#0a6fd0"/><rect x="1375" y="917" width="1" height="1" fill="#0a6fd0"/><rect x="1378" y="917" width="1" height="1" fill="#0a6fd0"/><rect x="1381" y="917" width="1" height="1" fill="#0a6fd0"/><rect x="1384" y="917" width="1" height="1" fill="#0a6fd0"/><rect x="1387" y="917" width="1" height="1" fill="#0a6fd0"/><rect x="1390" y="917" width="1" height="1" fill="#0a6fd0"/><rect x="1393" y="917" width="1" height="1" fill="#0a6fd0"/><rect x="1396" y="917" width="1" height="1" fill="#0a6fd0"/><rect x="1399" y="917" width="1" height="1" fill="#0a6fd0"/><rect x="1402" y="917" width="1" height="1" fill="#0a6fd0"/><rect x="1405" y="917" width="1" height="1" fill="#0a6fd0"/><rect x="1408" y="917" width="1" height="1" fill="#0a6fd0"/><rect x="1411" y="917" width="1" height="1" fill="#0a6fd0"/><rect x="1414" y="917" width="1" height="1" fill="#0a6fd0"/><rect x="1417" y="917" width="1" height="1" fill="#0a6fd0"/><rect x="1420" y="917" width="1" height="1" fill="#0a6fd0"/><rect x="1423" y="917" width="1" height="1" fill="#0a6fd0"/><rect x="1426" y="917" width="1" height="1" fill="#0a6fd0"/><rect x="1429" y="917" width="1" height="1" fill="#0a6fd0"/><rect x="1432" y="917" width="1" height="1" fill="#0a6fd0"/><rect x="1435" y="917" width="1" height="1" fill="#0a6fd0"/><rect x="1438" y="917" width="1" height="1" fill="#0a6fd0"/><rect x="1441" y="917" width="1" height="1" fill="#0a6fd0"/><rect x="1444" y="917" width="1" height="1" fill="#0a6fd0"/><rect x="1447" y="917" width="1" height="1" fill="#0a6fd0"/><rect x="1450" y="917" width="1" height="1" fill="#0a6fd0"/><rect x="1453" y="917" width="1" height="1" fill="#0a6fd0"/><rect x="1456" y="917" width="1" height="1" fill="#0a6fd0"/><rect x="1459" y="917" width="1" height="1" fill="#0a6fd0"/><rect x="1462" y="917" width="1" height="1" fill="#0a6fd0"/><rect x="1465" y="917" width="1" height="1" fill="#0a6fd0"/><rect x="1468" y="917" width="1" height="1" fill="#0a6fd0"/><rect x="1471" y="917" width="1" height="1" fill="#0a6fd0"/><rect x="1474" y="917" width="1" height="1" fill="#0a6fd0"/><rect x="1477" y="917" width="1" height="1" fill="#0a6fd0"/><rect x="1480" y="917" width="1" height="1" fill="#0a6fd0"/><rect x="1483" y="917" width="1" height="1" fill="#0a6fd0"/><rect x="1486" y="917" width="1" height="1" fill="#0a6fd0"/><rect x="1489" y="917" width="1" height="1" fill="#0a6fd0"/><rect x="1492" y="917" width="1" height="1" fill="#0a6fd0"/><rect x="1495" y="917" width="1" height="1" fill="#0a6fd0"/><rect x="1498" y="917" width="1" height="1" fill="#0a6fd0"/><rect x="1501" y="917" width="1" height="1" fill="#0a6fd0"/><path d="M996.5 916L999.5 919L1002.5 916Z" fill="#0a6fd0"/><path d="M1505.5 916L1508.5 919L1511.5 916Z" fill="#0a6fd0"/>
</svg>
<div class="a" style="left:596px;top:922px;width:1317px;height:64px;background:#fff"></div>
<div class="a" style="left:598px;top:925px;font-size:18px;line-height:22px;transform:scaleX(.885);transform-origin:0 0">1234567890</div>
<div class="a" style="left:687px;top:922px;width:1px;height:24px;background:#000"></div>
<div class="a" style="left:596px;top:986px;width:1317px;height:28px;background:linear-gradient(#fdfdfd,#e6e6e6)"></div>
<div class="t" style="left:607px;top:993px">通过串口发送</div>
<svg class="a" style="left:688px;top:1000px" width="6" height="4"><path d="M0 0H6L3 3.2Z" fill="#222"/></svg>
<div class="chk" style="left:741px;top:993px"></div><div class="t" style="left:757px;top:993px">Hex</div>
<div class="t" style="left:805px;top:993px">发送:10</div>
<div class="a" style="left:1631px;top:945px;font-size:20px;line-height:24px;color:#bcbcbc;letter-spacing:.7px;-webkit-text-stroke:0">激活 Windows</div>
<div class="a" style="left:1631px;top:971px;font-size:15px;line-height:17px;color:#bcbcbc;letter-spacing:.3px;-webkit-text-stroke:0">转到“设置”以激活 Windows。</div>
<svg class="a" style="left:1832px;top:990px" width="20" height="19">
<defs><radialGradient id="spk" cx=".4" cy=".4" r=".7"><stop offset="0" stop-color="#e8e8e8"/><stop offset=".55" stop-color="#999"/><stop offset="1" stop-color="#333"/></radialGradient></defs>
<ellipse cx="8.2" cy="7.6" rx="6" ry="6.3" fill="url(#spk)"/>
<circle cx="7" cy="6.5" r="3.3" fill="none" stroke="#555" stroke-width="1"/>
<circle cx="6.3" cy="5.6" r="1.6" fill="#fff"/>
<circle cx="3.2" cy="6" r=".8" fill="#5a5adc"/><circle cx="5.5" cy="10.5" r=".7" fill="#5a5adc"/>
<path d="M11.5 15.5Q15 14 16 10" stroke="#7878ff" fill="none" stroke-width="1"/>
<path d="M10 17.5Q16 16 17.8 11" stroke="#9a9aff" fill="none" stroke-width="1"/>
</svg>
<div class="t" style="left:1853px;top:993px">发送</div>
<svg class="a" style="left:1892px;top:999px" width="6" height="4"><path d="M0 0H6L3 3.2Z" fill="#222"/></svg>
<svg class="a" style="left:0;top:0" width="1920" height="1035" id="arrow"><path d="M782.5 523L791 538.5L786.5 536.5L774 950L773 950L777.5 536.5L772.5 538.5Z" fill="#ff1a10"/></svg>
</body></html>
